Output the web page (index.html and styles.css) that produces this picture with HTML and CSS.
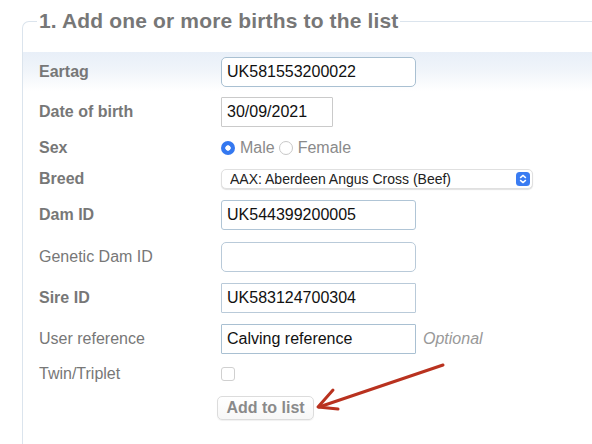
FILE: index.html
```html
<!DOCTYPE html>
<html lang="en">
<head>
<meta charset="utf-8">
<title>Add births</title>
<link rel="stylesheet" href="styles.css">
</head>
<body>
<div class="page">
  <fieldset class="panel">
    <legend class="panel-title">1. Add one or more births to the list</legend>

    <div class="row row-eartag row-highlight">
      <label class="label label-bold">Eartag</label>
      <input class="field field-wide field-round" type="text" value="UK581553200022">
    </div>

    <div class="row row-date">
      <label class="label label-bold">Date of birth</label>
      <input class="field field-date" type="text" value="30/09/2021">
    </div>

    <div class="row row-sex">
      <span class="label label-bold">Sex</span>
      <div class="radios">
        <label class="radio-opt"><input class="radio" type="radio" name="sex" checked> Male</label>
        <label class="radio-opt"><input class="radio" type="radio" name="sex"> Female</label>
      </div>
    </div>

    <div class="row row-breed">
      <span class="label label-bold">Breed</span>
      <div class="select-wrap">
        <select class="select">
          <option>AAX: Aberdeen Angus Cross (Beef)</option>
        </select>
        <svg class="select-btn" width="14" height="14" viewBox="0 0 14 14">
          <rect x="0" y="0" width="14" height="14" rx="3.5" fill="#3a7cf2"/>
          <path d="M4.5 5.6 L7 3.4 L9.5 5.6" fill="none" stroke="#fff" stroke-width="1.4" stroke-linecap="round" stroke-linejoin="round"/>
          <path d="M4.5 8.4 L7 10.6 L9.5 8.4" fill="none" stroke="#fff" stroke-width="1.4" stroke-linecap="round" stroke-linejoin="round"/>
        </svg>
      </div>
    </div>

    <div class="row row-dam">
      <label class="label label-bold">Dam ID</label>
      <input class="field field-wide field-soft" type="text" value="UK544399200005">
    </div>

    <div class="row">
      <label class="label">Genetic Dam ID</label>
      <input class="field field-wide field-round field-pale" type="text" value="">
    </div>

    <div class="row">
      <label class="label label-bold">Sire ID</label>
      <input class="field field-wide field-pale" type="text" value="UK583124700304">
    </div>

    <div class="row">
      <label class="label">User reference</label>
      <input class="field field-wide" type="text" value="Calving reference">
      <span class="hint">Optional</span>
    </div>

    <div class="row row-twin">
      <label class="label">Twin/Triplet</label>
      <input class="check" type="checkbox">
    </div>

    <div class="row row-action">
      <span class="label"></span>
      <button class="btn" type="button">Add to list</button>
    </div>
  </fieldset>

  <svg class="arrow" width="150" height="70" viewBox="0 0 150 70">
    <path d="M133 10 L9 52" fill="none" stroke="#b9321f" stroke-width="3" stroke-linecap="round"/>
    <path d="M23 35 L8 52 L28 54" fill="none" stroke="#b9321f" stroke-width="3" stroke-linecap="round" stroke-linejoin="round"/>
  </svg>
</div>
</body>
</html>
```

FILE: styles.css
```css
html, body {
  margin: 0;
  padding: 0;
  background: #ffffff;
  overflow: hidden;
}

body {
  font-family: "Liberation Sans", Arial, Helvetica, sans-serif;
  color: #777777;
}

.page {
  position: relative;
  padding: 9px 0 0 22px;
}

.panel {
  margin: 0;
  padding: 19px 0 40px 0;
  border: 1px solid #dbe4ed;
  border-right: 0;
  border-radius: 7px 0 0 7px;
  min-width: 0;
}

.panel-title {
  margin-left: 14px;
  padding: 0 2px;
  font-size: 21px;
  line-height: 24px;
  letter-spacing: 0.15px;
  font-weight: bold;
  color: #777777;
}

.row {
  display: flex;
  align-items: center;
  height: 41px;
  padding-left: 16px;
}

.row-eartag { height: 39px; }
.row-date { height: 41px; }
.row-sex { height: 32px; }
.row-breed { height: 29px; }
.row-dam { height: 43px; }
.row-twin { height: 30px; }
.row-action { height: 38px; }

.row-highlight {
  background: linear-gradient(#e8eff8 0%, #f1f5fa 50%, #ffffff 100%);
}

.label {
  flex: none;
  width: 182px;
  font-size: 16px;
  color: #777777;
}

.label-bold {
  font-weight: bold;
}

.field {
  box-sizing: border-box;
  height: 30px;
  padding: 0 5px;
  margin: 0;
  border: 1px solid #a9c0d2;
  border-radius: 1px;
  font-family: "Liberation Sans", Arial, sans-serif;
  font-size: 16px;
  color: #111111;
  background: #ffffff;
  outline: none;
}

.field-wide { width: 195px; }

.field-date {
  width: 112px;
  border-color: #cacaca;
}

.field-round {
  border-radius: 5px;
}

.field-soft {
  border-radius: 3px;
  border-color: #b0c5d6;
}

.field-pale {
  border-color: #b9cad9;
}

.hint {
  margin-left: 7px;
  font-size: 16px;
  font-style: italic;
  color: #999999;
}

.radios {
  display: flex;
  align-items: center;
  gap: 4px;
}

.radio-opt {
  display: flex;
  align-items: center;
  gap: 5px;
  font-size: 16px;
  color: #8a8a8a;
}

.radio {
  appearance: none;
  -webkit-appearance: none;
  box-sizing: border-box;
  width: 14px;
  height: 14px;
  margin: 0;
  border: 1px solid #c8c8c8;
  border-radius: 50%;
  background: #ffffff;
}

.radio:checked {
  border: 0;
  background: radial-gradient(circle, #ffffff 0 2.4px, #3478f0 3px);
}

.select-wrap {
  position: relative;
  width: 312px;
  height: 20px;
}

.select {
  appearance: none;
  -webkit-appearance: none;
  box-sizing: border-box;
  width: 312px;
  height: 20px;
  margin: 0;
  padding: 0 0 0 8px;
  border: 1px solid #e0e0e0;
  border-radius: 5px;
  background: #ffffff;
  box-shadow: 0 1px 1px rgba(0, 0, 0, 0.12);
  font-family: "Liberation Sans", Arial, sans-serif;
  font-size: 14px;
  color: #222222;
  outline: none;
}

.select-btn {
  position: absolute;
  right: 3px;
  top: 3px;
}

.check {
  appearance: none;
  -webkit-appearance: none;
  box-sizing: border-box;
  width: 14px;
  height: 14px;
  margin: 0;
  border: 1px solid #d0d0d0;
  border-radius: 3px;
  background: #ffffff;
}

.btn {
  box-sizing: border-box;
  margin-left: -4px;
  width: 97px;
  height: 24px;
  padding: 0;
  border: 1px solid #dcdcdc;
  border-radius: 5px;
  background: linear-gradient(#ffffff, #f7f7f7);
  box-shadow: 0 1px 1px rgba(0, 0, 0, 0.06);
  font-family: "Liberation Sans", Arial, sans-serif;
  font-size: 16px;
  font-weight: bold;
  color: #8a8a8a;
}

.arrow {
  position: absolute;
  left: 310px;
  top: 355px;
}
```
